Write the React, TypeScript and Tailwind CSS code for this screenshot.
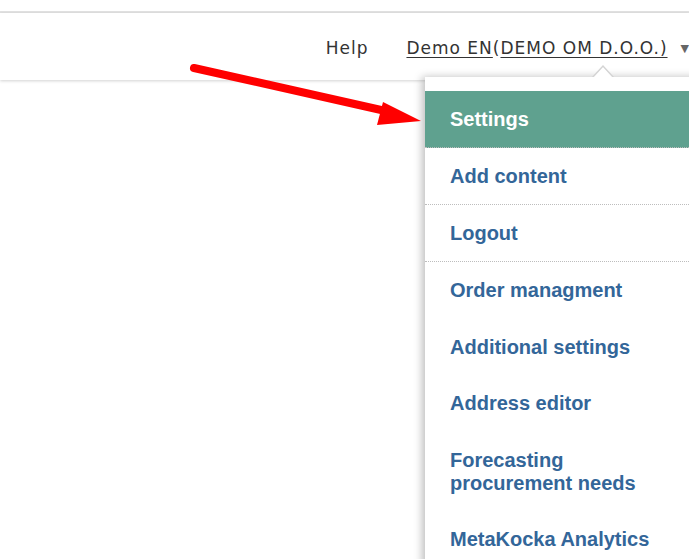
import React from "react"

const items: { label: string[]; border?: boolean; active?: boolean }[] = [
    { label: ["Settings"], active: true, border: true },
    { label: ["Add content"], border: true },
    { label: ["Logout"], border: true },
    { label: ["Order managment"] },
    { label: ["Additional settings"] },
    { label: ["Address editor"] },
    { label: ["Forecasting", "procurement needs"] },
    { label: ["MetaKocka Analytics"] },
]

export default function App() {
    return (
        <div className="relative w-[689px] h-[559px] overflow-hidden bg-white">
            {/* top strip */}
            <div className="h-[11px] bg-white" />
            <div className="h-[2px] bg-[#e2e2e2]" />

            {/* header */}
            <div className="h-[67px] bg-white shadow-[0_1px_3px_rgba(0,0,0,0.18)] flex items-center justify-end pt-[5px] font-['DejaVu_Sans',sans-serif] text-[17px] text-[#333] tracking-[1px]">
                <span>Help</span>
                <span className="ml-[38px]">
                    <span className="underline underline-offset-[3px]">Demo EN</span>
                    <span>(</span>
                    <span className="underline underline-offset-[3px]">DEMO OM D.O.O.)</span>
                </span>
                <span className="ml-[13px] text-[11px] tracking-normal text-[#666]">▼</span>
            </div>

            {/* dropdown menu */}
            <div className="absolute left-[425px] top-[77px] right-[-20px] bottom-[-20px] bg-white shadow-[-3px_0_8px_rgba(0,0,0,0.25)] pt-[14px] font-['Liberation_Sans',Arial,sans-serif]">
                <svg className="absolute left-[166px] top-[-13px]" width="24" height="14" viewBox="0 0 24 14">
                    <polygon points="1,14 12,2 23,14" fill="#ffffff" stroke="#d4d4d4" strokeWidth="1.5" />
                    <rect x="0" y="13" width="24" height="2" fill="#ffffff" />
                </svg>
                {items.map((it) => (
                    <div
                        key={it.label[0]}
                        className={`px-[25px] text-[20px] leading-[23px] font-bold ${
                            it.active ? "bg-[#5fa18f] text-white" : "text-[#336699]"
                        } ${it.border ? "pt-[16.5px] pb-[16.5px] border-b border-dotted border-[#bdbdbd]" : "pt-[17px] pb-[16.5px]"}`}
                    >
                        {it.label.map((l) => (
                            <div key={l}>{l}</div>
                        ))}
                    </div>
                ))}
            </div>

            {/* annotation arrow */}
            <svg className="absolute left-0 top-0 pointer-events-none" width="689" height="559" viewBox="0 0 689 559">
                <line x1="194" y1="68" x2="390" y2="112" stroke="#ff0000" strokeWidth="8" strokeLinecap="round" />
                <polygon points="383,102 421,121 377,125" fill="#ff0000" />
            </svg>
        </div>
    )
}
